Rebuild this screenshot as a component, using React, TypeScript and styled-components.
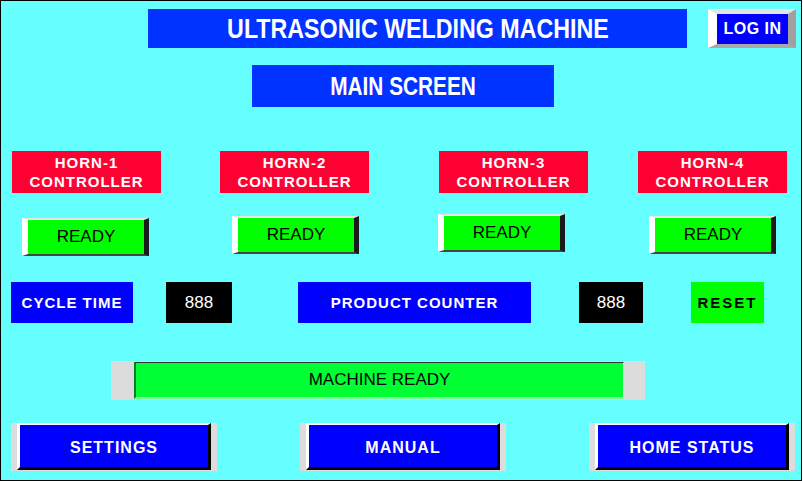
import styled, { createGlobalStyle } from 'styled-components';

const GlobalStyle = createGlobalStyle`
  body {
    margin: 0;
    background: #ffffff;
    font-family: "Liberation Sans", Arial, sans-serif;
  }
`;

const HORNS = [
  { id: 1, dx: 10, dy: 25 },
  { id: 2, dx: 12, dy: 23 },
  { id: 3, dx: -1, dy: 21 },
  { id: 4, dx: 11, dy: 23 },
];

const NAV = ['SETTINGS', 'MANUAL', 'HOME STATUS'];

const App = () => {
  return (
    <>
      <GlobalStyle />
      <Frame>
        <Header>
          <Title>
            <Condensed $scale={0.83}>ULTRASONIC WELDING MACHINE</Condensed>
          </Title>
          <LoginButton>LOG IN</LoginButton>
        </Header>
        <ScreenName>
          <Condensed $scale={0.8}>MAIN SCREEN</Condensed>
        </ScreenName>

        <HornRow>
          {HORNS.map((horn) => (
            <HornColumn key={horn.id}>
              <HornLabel>
                <span>HORN-{horn.id}</span>
                <span>CONTROLLER</span>
              </HornLabel>
              <ReadyButton $dx={horn.dx} $dy={horn.dy}>READY</ReadyButton>
            </HornColumn>
          ))}
        </HornRow>

        <StatusRow>
          <InfoLabel $width={122}>CYCLE TIME</InfoLabel>
          <Display $width={66} $offset={33}>888</Display>
          <InfoLabel $width={233} $offset={66}>PRODUCT COUNTER</InfoLabel>
          <Display $width={64} $offset={48}>888</Display>
          <ResetButton>RESET</ResetButton>
        </StatusRow>

        <MachineTrack>
          <MachineLamp>MACHINE READY</MachineLamp>
        </MachineTrack>

        <NavRow>
          {NAV.map((label) => (
            <NavSlot key={label}>
              <NavButton>{label}</NavButton>
            </NavSlot>
          ))}
        </NavRow>
      </Frame>
    </>
  );
};

const Frame = styled.div`
  box-sizing: border-box;
  width: 802px;
  height: 481px;
  border: 1px solid #000000;
  background-color: #66ffff;
  display: flex;
  flex-direction: column;
  align-items: flex-start;
`;

const Header = styled.div`
  display: flex;
  flex-direction: row;
  align-items: flex-start;
  gap: 21px;
  margin: 8px 0 0 147px;
`;

// the panel font is a tall condensed bold face, squeeze Liberation Sans to fit
const Condensed = styled.span<{ $scale: number }>`
  display: inline-block;
  white-space: nowrap;
  transform: scaleX(${(p) => p.$scale});
`;

const Title = styled.div`
  width: 539px;
  height: 39px;
  background-color: #0033ff;
  color: #ffffff;
  display: flex;
  align-items: center;
  justify-content: center;
  font-weight: 700;
  font-size: 28px;
`;

const LoginButton = styled.button`
  box-sizing: border-box;
  width: 88px;
  height: 39px;
  padding: 0;
  border-style: solid;
  border-width: 5px 8px 4px 9px;
  border-color: #e4e4e4 #a0a0a0 #a8a8a8 #ffffff;
  background-color: #0000ff;
  color: #ffffff;
  font-family: "Liberation Sans", Arial, sans-serif;
  font-weight: 700;
  font-size: 16px;
  letter-spacing: 0.5px;
  cursor: pointer;
`;

const ScreenName = styled.div`
  width: 302px;
  height: 42px;
  margin: 17px 0 0 251px;
  background-color: #0033ff;
  color: #ffffff;
  display: flex;
  align-items: center;
  justify-content: center;
  font-weight: 700;
  font-size: 26px;
`;

const HornRow = styled.div`
  display: grid;
  grid-template-columns: 208px 219px 199px 149px;
  align-items: start;
  margin: 44px 0 0 11px;
`;

const HornColumn = styled.div`
  display: flex;
  flex-direction: column;
  align-items: flex-start;
`;

const HornLabel = styled.div`
  width: 149px;
  height: 42px;
  background-color: #ff0033;
  color: #ffffff;
  display: flex;
  flex-direction: column;
  align-items: center;
  justify-content: center;
  font-weight: 700;
  font-size: 15px;
  line-height: 19px;
  letter-spacing: 1px;
`;

const ReadyButton = styled.button<{ $dx: number; $dy: number }>`
  box-sizing: border-box;
  width: 127px;
  height: 38px;
  margin: ${(p) => p.$dy}px 0 0 ${(p) => p.$dx}px;
  padding: 0;
  border-style: solid;
  border-width: 2px 5px 2px 6px;
  border-color: #e6e6e6 #1a1a1a #444444 #ffffff;
  background-color: #00ff00;
  color: #000000;
  font-family: "Liberation Sans", Arial, sans-serif;
  font-size: 17px;
  cursor: pointer;
`;

const StatusRow = styled.div`
  display: flex;
  flex-direction: row;
  margin: 26px 0 0 10px;
  height: 41px;
`;

const InfoLabel = styled.div<{ $width: number; $offset?: number }>`
  width: ${(p) => p.$width}px;
  margin-left: ${(p) => p.$offset ?? 0}px;
  background-color: #0000ff;
  color: #ffffff;
  display: flex;
  align-items: center;
  justify-content: center;
  font-weight: 700;
  font-size: 15px;
  letter-spacing: 1px;
`;

const Display = styled.div<{ $width: number; $offset: number }>`
  width: ${(p) => p.$width}px;
  margin-left: ${(p) => p.$offset}px;
  background-color: #000000;
  color: #ffffff;
  display: flex;
  align-items: center;
  justify-content: center;
  font-size: 17px;
`;

const ResetButton = styled.button`
  width: 73px;
  margin-left: 48px;
  padding: 0;
  border: none;
  background-color: #00ff00;
  color: #000000;
  font-family: "Liberation Sans", Arial, sans-serif;
  font-weight: 700;
  font-size: 15px;
  letter-spacing: 2px;
  cursor: pointer;
`;

const MachineTrack = styled.div`
  box-sizing: border-box;
  width: 534px;
  height: 39px;
  margin: 38px 0 0 110px;
  padding: 1px 21px 0 23px;
  background-color: #dcdcdc;
  display: flex;
`;

const MachineLamp = styled.div`
  flex: 1;
  height: 37px;
  box-sizing: border-box;
  border-style: solid;
  border-width: 1px 1px 2px 2px;
  border-color: #333333 #c8ffd0 #80ff99 #00802b;
  background-color: #00ff33;
  color: #000000;
  display: flex;
  align-items: center;
  justify-content: center;
  font-size: 17px;
`;

const NavRow = styled.div`
  display: flex;
  flex-direction: row;
  gap: 83px;
  margin: 23px 0 0 10px;
`;

const NavSlot = styled.div`
  box-sizing: border-box;
  width: 206px;
  height: 48px;
  padding: 0 6px 1px 6px;
  background-color: #dcdcdc;
  display: flex;
`;

const NavButton = styled.button`
  flex: 1;
  padding: 3px 0 0 0;
  border-style: solid;
  border-width: 2px 3px 3px 3px;
  border-color: #ffffff #000000 #000000 #ffffff;
  background-color: #0000ff;
  color: #ffffff;
  font-family: "Liberation Sans", Arial, sans-serif;
  font-weight: 700;
  font-size: 16px;
  letter-spacing: 1px;
  cursor: pointer;
`;

export default App;
